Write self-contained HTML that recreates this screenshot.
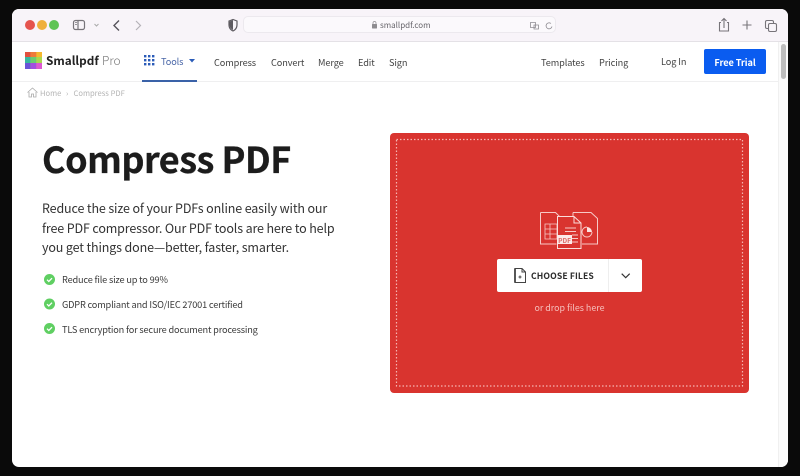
<!DOCTYPE html>
<html><head><meta charset="utf-8"><style>
html,body{margin:0;padding:0;width:800px;height:476px;overflow:hidden;background:#0a0a0a}
body{position:relative;font-family:"Noto Sans CJK JP","Liberation Sans",sans-serif;color:#333}
#r{position:absolute;left:0;top:0;width:800px;height:476px;filter:blur(.3px)}
.t{position:absolute;white-space:nowrap;line-height:20px;height:20px}
.n{font-size:9.2px;letter-spacing:-.1px;color:#444;top:52px}
.l{font-size:9.2px;letter-spacing:-.17px;color:#3c3c3c;left:62px}
.p{font-size:12.5px;letter-spacing:-.14px;color:#333;left:42px}
.c{font-size:7.6px;color:#b4b4b4;top:83px}
.b{position:absolute}
svg{position:absolute;overflow:visible}
</style></head><body><div id="r">
<div class="b" style="left:12px;top:9px;width:776px;height:458px;background:#fff;border-radius:7px;overflow:hidden">
<div class="b" style="left:0;top:0;width:776px;height:32px;background:#f8f4f9;border-bottom:1px solid #e4e1e6"></div>
<div class="b" style="left:0;top:72px;width:766px;height:1px;background:#efeff0"></div>
<div class="b" style="left:130px;top:71px;width:55px;height:2px;background:#3a62a8"></div>
<div class="b" style="left:766px;top:33px;width:10px;height:425px;background:#fbfbfb;border-left:1px solid #f0f0f0;box-sizing:border-box"></div>
<div class="b" style="left:769px;top:35px;width:5px;height:35px;background:#bdbdbd;border-radius:3px"></div>
</div>

<div class="b" style="left:25px;top:20px;width:10px;height:10px;border-radius:50%;background:#e5544e"></div>
<div class="b" style="left:37px;top:20px;width:10px;height:10px;border-radius:50%;background:#efb03c"></div>
<div class="b" style="left:49px;top:20px;width:10px;height:10px;border-radius:50%;background:#5fc454"></div>
<svg style="left:0;top:0" width="800" height="45" fill="none" stroke="#77747a" stroke-width="1.2">
<rect x="73.500" y="20.500" width="11" height="9" rx="2"/>
<path d="M78 20.500v9"/><path d="M75 22.500h2M75 24.500h2" stroke-width=".8"/>
<path d="M94.500 24l2 2 2-2" stroke="#aaa" stroke-width="1"/>
<path d="M119 20.500l-5 5 5 5" stroke="#55525a" stroke-width="1.400"/>
<path d="M136 21l4.500 4.500-4.500 4.500" stroke="#b5b2b8" stroke-width="1.200"/>
<path d="M229 21l4-1.500 4 1.500v4c0 3-2 5-4 6-2-1-4-3-4-6z" stroke="#5d5a60" stroke-width="1.200"/>
<path d="M233 20v10c-2-1-3.500-3-3.500-5v-3.500z" fill="#5d5a60" stroke="none"/>
<path d="M724 19v9M721.500 21l2.500-2.500 2.500 2.500" stroke-width="1.100"/>
<path d="M721 22.500h-1.500v8.500h9v-8.500h-1.500" stroke-width="1.100"/>
<path d="M747 20.500v9M742.500 25h9" stroke-width="1.100"/>
<rect x="765.500" y="20.500" width="8" height="8" rx="1.500" stroke-width="1.100"/>
<rect x="768.500" y="23.500" width="8" height="8" rx="1.500" stroke-width="1.100" fill="#f8f4f9"/>
</svg>
<div class="b" style="left:243px;top:16px;width:313px;height:17px;background:#fbf9fc;border:1px solid #ece9ee;border-radius:5px;box-sizing:border-box"></div>
<svg style="left:0;top:0" width="600" height="40" fill="none">
<rect x="372" y="24" width="5" height="4.500" rx=".5" fill="#8e8c90"/><path d="M373 24v-1a1.500 1.500 0 0 1 3 0v1" stroke="#8e8c90" stroke-width=".7"/>
<path d="M530.500 22.500h5v5h-5zM534 25h4.500v4H534z" stroke="#8f8c92" stroke-width=".8"/>
<path d="M551 23.500a3 3 0 1 0 1 3" stroke="#8f8c92" stroke-width=".8"/>
</svg>
<div class="t" style="left:380px;top:16px;font-size:8px;color:#66646a">smallpdf.com</div>

<svg style="left:25px;top:52px" width="17" height="17">
<rect width="17" height="17" rx="1" fill="#f3c33f"/>
<rect width="5.700" height="5" fill="#e2503f"/><rect x="5.700" width="5.700" height="5" fill="#ee7b3a"/><rect x="11.400" width="5.600" height="5" fill="#f5b82e"/>
<rect y="5" width="5.700" height="6" fill="#37b8a0"/><rect x="5.700" y="5" width="5.700" height="6" fill="#6ccb70"/><rect x="11.400" y="5" width="5.600" height="6" fill="#a8d84e"/>
<rect y="11" width="5.700" height="6" fill="#6a54d8"/><rect x="5.700" y="11" width="5.700" height="6" fill="#a24fe0"/><rect x="11.400" y="11" width="5.600" height="6" fill="#dd58d0"/>
</svg>
<div class="t" style="left:46px;top:51px;font-size:11.800px;font-weight:700;color:#222">Smallpdf</div>
<div class="t" style="left:102px;top:51px;font-size:12px;color:#777;font-weight:300">Pro</div>

<svg style="left:144px;top:55px" width="11" height="11" fill="#2a5bb8">
<rect x="0" y="0" width="2.400" height="2.400"/><rect x="4" y="0" width="2.400" height="2.400"/><rect x="8" y="0" width="2.400" height="2.400"/>
<rect x="0" y="4" width="2.400" height="2.400"/><rect x="4" y="4" width="2.400" height="2.400"/><rect x="8" y="4" width="2.400" height="2.400"/>
<rect x="0" y="8" width="2.400" height="2.400"/><rect x="4" y="8" width="2.400" height="2.400"/><rect x="8" y="8" width="2.400" height="2.400"/>
</svg>
<div class="t n" style="left:161px;top:50.500px;color:#4a67a8">Tools</div>
<svg style="left:188.500px;top:59px" width="6" height="4"><path d="M0 0h6l-3 3.500z" fill="#2a5bb8"/></svg>
<div class="t n" style="left:214px">Compress</div>
<div class="t n" style="left:271px">Convert</div>
<div class="t n" style="left:318px">Merge</div>
<div class="t n" style="left:358px">Edit</div>
<div class="t n" style="left:389px">Sign</div>
<div class="t n" style="left:541px">Templates</div>
<div class="t n" style="left:599px">Pricing</div>
<div class="t n" style="left:661px;top:51px">Log In</div>
<div class="b" style="left:704px;top:49px;width:62px;height:25px;background:#0a5cf0;border-radius:2px"></div>
<div class="t n" style="left:704px;width:62px;text-align:center;font-weight:700;color:#fff">Free Trial</div>

<svg style="left:27px;top:87px" width="11" height="11" fill="none" stroke="#a9a9a9" stroke-width=".8"><path d="M.5 5.500L5.500 1l5 4.500M2 5v5h2.500V7h2v3H9V5"/></svg>
<div class="t c" style="left:40px;top:83.500px">Home</div>
<div class="t c" style="left:66px;top:83.500px">›</div>
<div class="t c" style="left:73.500px;top:83.500px">Compress PDF</div>

<div class="t" style="left:42px;top:136px;height:44px;line-height:44px;font-size:36px;letter-spacing:-.5px;font-weight:700;color:#1c1c1c;-webkit-text-stroke:.3px #1c1c1c">Compress PDF</div>
<div class="t p" style="top:198px">Reduce the size of your PDFs online easily with our</div>
<div class="t p" style="top:218px">free PDF compressor. Our PDF tools are here to help</div>
<div class="t p" style="top:237px">you get things done—better, faster, smarter.</div>

<svg style="left:44px;top:274px" width="11" height="60">
<g><circle cx="5.500" cy="5.500" r="5.500" fill="#5fcf62"/><path d="M3 5.700l1.800 1.800L8 4.200" fill="none" stroke="#fff" stroke-width="1.300"/></g>
<g transform="translate(0 24.500)"><circle cx="5.500" cy="5.500" r="5.500" fill="#5fcf62"/><path d="M3 5.700l1.800 1.800L8 4.200" fill="none" stroke="#fff" stroke-width="1.300"/></g>
<g transform="translate(0 49)"><circle cx="5.500" cy="5.500" r="5.500" fill="#5fcf62"/><path d="M3 5.700l1.800 1.800L8 4.200" fill="none" stroke="#fff" stroke-width="1.300"/></g>
</svg>
<div class="t l" style="top:269px">Reduce file size up to 99%</div>
<div class="t l" style="top:294px">GDPR compliant and ISO/IEC 27001 certified</div>
<div class="t l" style="top:318.500px">TLS encryption for secure document processing</div>

<div class="b" style="left:390px;top:133px;width:359px;height:260px;background:#d9342f;border-radius:4px"></div>
<svg style="left:0;top:0" width="800" height="476" fill="none"><rect x="396.500" y="139.500" width="346" height="246.500" stroke="#f6b5b1" stroke-width="1.200" stroke-dasharray="1.500 2"/></svg>

<svg style="left:540px;top:211px" width="60" height="38" fill="none" stroke="#f7c9c6" stroke-width="1">
<path d="M.5 1.500h15l5 5v6M.5 1.500v31.500h16"/>
<path d="M5 13h12v15H5zM5 18h12M5 23h12M10 13v15" stroke-width=".8"/>
<path d="M33 1.500h18l6.500 6v25.500H42M33 1.500v5"/>
<path d="M47 16a5 5 0 0 1 5 5h-5z" fill="#fbe3e1" stroke="none"/>
<path d="M47 16a5 5 0 1 0 5 5" stroke-width=".9"/>
<path d="M17.500 5.500h16.500l7 6.500v25.500H17.500zM34 5.500v6.500h7" fill="#d9342f" stroke="#fbdcda"/>
<path d="M25 17h11M25 20.500h11M32 24h6M32 27.500h6M32 31h6" stroke-width=".9"/>
<rect x="17" y="24" width="15" height="9" fill="#fbe9e8" stroke="none"/>
</svg>
<div class="t" style="left:557px;top:235px;width:15px;text-align:center;font-size:6.500px;font-weight:700;color:#dc6a65;height:10px;line-height:10px">PDF</div>

<div class="b" style="left:497px;top:259px;width:145px;height:33px;background:#fff;border-radius:2px"></div>
<div class="b" style="left:608px;top:259px;width:1px;height:33px;background:#eee"></div>
<svg style="left:514px;top:268px" width="13" height="16" fill="none" stroke="#444" stroke-width="1"><path d="M1 .5h7l3.500 3.500v10.500H1z"/><path d="M8 .5v3.500h3.500"/><path d="M4.500 9h3M6 7.500v3"/><path d="M1 .5v14" stroke-width="1.800"/></svg>
<div class="t" style="left:531px;top:266px;font-size:8.600px;font-weight:700;color:#2b2b2b;letter-spacing:.12px">CHOOSE FILES</div>
<svg style="left:621px;top:273px" width="10" height="6" fill="none" stroke="#333" stroke-width="1.200"><path d="M.7.700l4 4 4-4"/></svg>
<div class="t" style="left:390px;width:359px;text-align:center;top:298px;font-size:8.900px;color:#f6c0bd">or drop files here</div>
</div></body></html>
